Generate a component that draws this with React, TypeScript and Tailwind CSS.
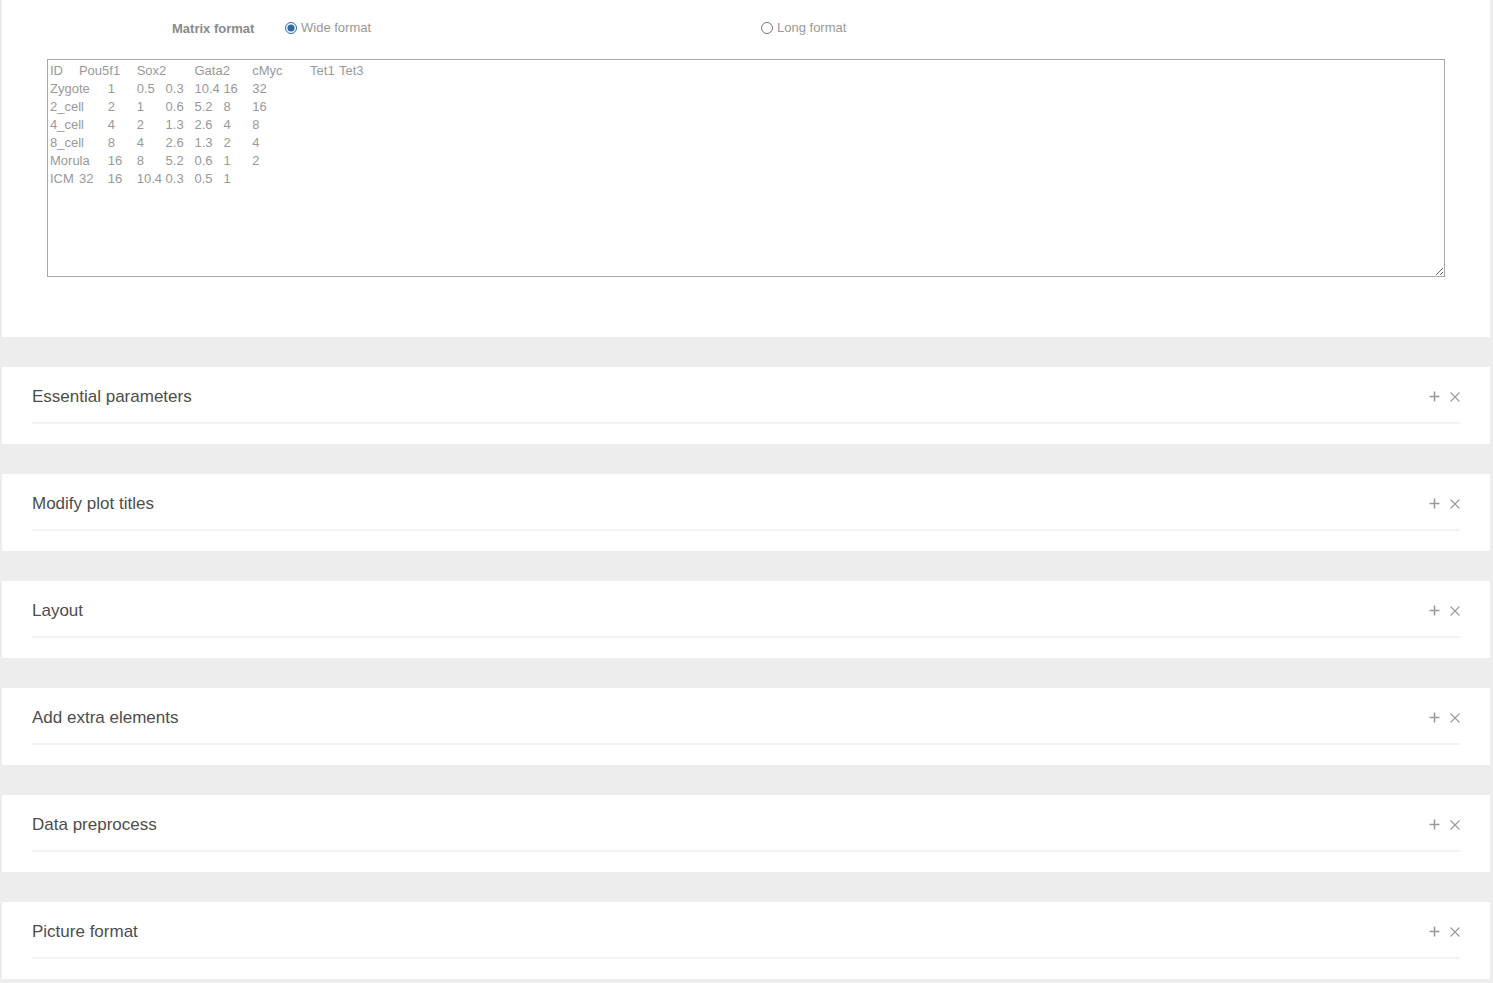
import React from 'react';

const sample = [
  'ID\tPou5f1\tSox2\tGata2\tcMyc\tTet1\tTet3',
  'Zygote\t1\t0.5\t0.3\t10.4\t16\t32',
  '2_cell\t2\t1\t0.6\t5.2\t8\t16',
  '4_cell\t4\t2\t1.3\t2.6\t4\t8',
  '8_cell\t8\t4\t2.6\t1.3\t2\t4',
  'Morula\t16\t8\t5.2\t0.6\t1\t2',
  'ICM\t32\t16\t10.4\t0.3\t0.5\t1',
].join('\n');

const sections = [
  'Essential parameters',
  'Modify plot titles',
  'Layout',
  'Add extra elements',
  'Data preprocess',
  'Picture format',
];

function Panel({ title }: { title: string }) {
  return (
    <div className="bg-white mt-[30px] px-[30px] pb-[20px]">
      <div className="flex items-center justify-between h-[57px] border-b-2 border-[#f3f3f3]">
        <h2 className="text-[17px] text-[#4d4d4d] pt-[4px]">{title}</h2>
        <div className="flex items-center gap-[10px] pt-[4px] pr-0 text-[#999]">
          {/* expand */}
          <svg width="11" height="11" viewBox="0 0 11 11">
            <path d="M5.5 0.5v10M0.5 5.5h10" stroke="currentColor" strokeWidth="1.6" />
          </svg>
          {/* close */}
          <svg width="10" height="10" viewBox="0 0 10 10">
            <path d="M0.5 0.5l9 9M9.5 0.5l-9 9" stroke="currentColor" strokeWidth="1.1" />
          </svg>
        </div>
      </div>
    </div>
  );
}

export default function App() {
  return (
    <div
      className="min-h-[983px] bg-[#ededed] pl-[2px] pr-[3px] pb-[4px]"
      style={{ fontFamily: '"Liberation Sans", Arial, sans-serif' }}
    >
      {/* Data input panel */}
      <div className="bg-white pt-[18px] pb-[60px]">
        <div className="flex items-center h-[20px]">
          <label className="ml-[170px] w-[113px] text-[13px] font-bold text-[#8a8a8a] pt-[2px]">
            Matrix format
          </label>
          <div className="flex items-center w-[476px]">
            <input type="radio" name="fmt" defaultChecked className="m-0 w-[12px] h-[12px] accent-[#2a6aa8]" />
            <span className="ml-[4px] text-[13px] text-[#999]">Wide format</span>
          </div>
          <div className="flex items-center">
            <input type="radio" name="fmt" className="m-0 w-[12px] h-[12px]" />
            <span className="ml-[4px] text-[13px] text-[#999]">Long format</span>
          </div>
        </div>
        <div className="px-[45px] mt-[21px]">
          <textarea
            defaultValue={sample}
            spellCheck={false}
            className="block w-full h-[218px] border border-[#a9a9a9] px-[2px] py-[2px] text-[13px] leading-[18px] text-[#999] outline-none [tab-size:8]"
            style={{ fontFamily: '"Liberation Sans", Arial, sans-serif' }}
          />
        </div>
      </div>

      {sections.map((s) => (
        <Panel key={s} title={s} />
      ))}
    </div>
  );
}
